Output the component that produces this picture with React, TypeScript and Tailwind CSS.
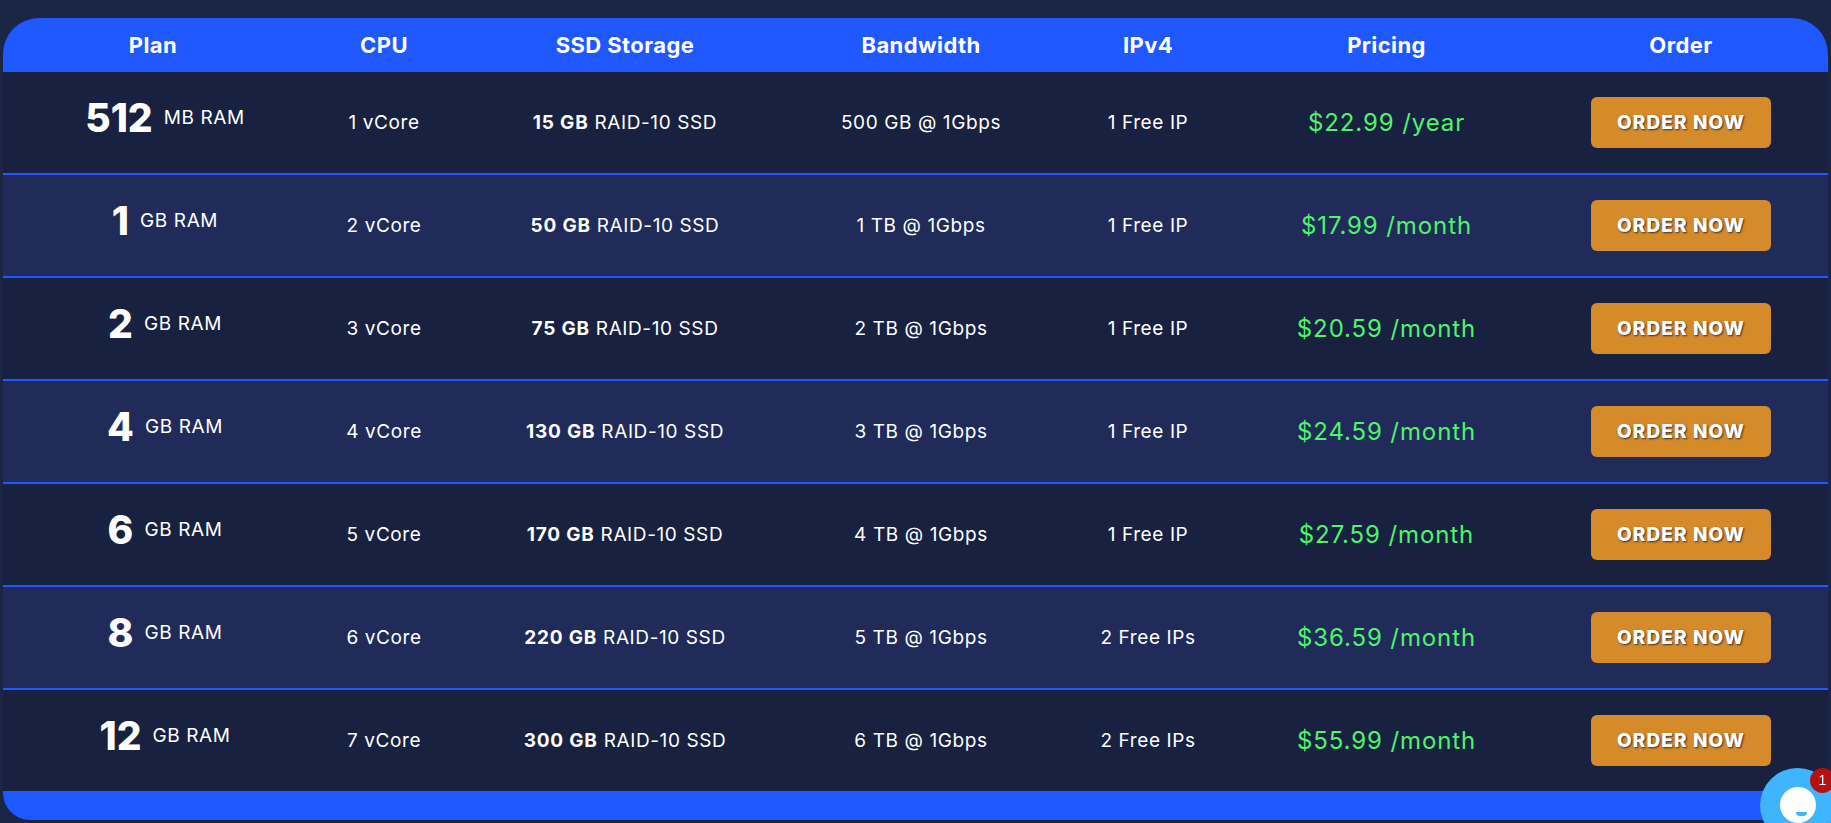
const plans = [
  { size: "512", unit: "MB RAM", cpu: "1 vCore", ssd: "15 GB", bw: "500 GB @ 1Gbps", ip: "1 Free IP", price: "$22.99 /year" },
  { size: "1", unit: "GB RAM", cpu: "2 vCore", ssd: "50 GB", bw: "1 TB @ 1Gbps", ip: "1 Free IP", price: "$17.99 /month" },
  { size: "2", unit: "GB RAM", cpu: "3 vCore", ssd: "75 GB", bw: "2 TB @ 1Gbps", ip: "1 Free IP", price: "$20.59 /month" },
  { size: "4", unit: "GB RAM", cpu: "4 vCore", ssd: "130 GB", bw: "3 TB @ 1Gbps", ip: "1 Free IP", price: "$24.59 /month" },
  { size: "6", unit: "GB RAM", cpu: "5 vCore", ssd: "170 GB", bw: "4 TB @ 1Gbps", ip: "1 Free IP", price: "$27.59 /month" },
  { size: "8", unit: "GB RAM", cpu: "6 vCore", ssd: "220 GB", bw: "5 TB @ 1Gbps", ip: "2 Free IPs", price: "$36.59 /month" },
  { size: "12", unit: "GB RAM", cpu: "7 vCore", ssd: "300 GB", bw: "6 TB @ 1Gbps", ip: "2 Free IPs", price: "$55.99 /month" },
];

const headers = ["Plan", "CPU", "SSD Storage", "Bandwidth", "IPv4", "Pricing", "Order"];
const cols = "grid grid-cols-[300px_162px_320px_272px_182px_295px_1fr]";

export default function App() {
  return (
    <div className="h-[823px] overflow-hidden bg-[#1b2545] px-[3px] pt-[18px] font-['Inter','Noto_Sans',sans-serif] text-white">
      <div className="overflow-hidden rounded-t-[36px] rounded-b-[27px]">
        <div className={`${cols} h-[54px] items-center bg-[#2058ff] text-center text-[22px] font-bold tracking-[0.4px]`}>
          {headers.map((h) => (
            <div key={h}>{h}</div>
          ))}
        </div>
        {plans.map((p, i) => (
          <div
            key={p.size}
            className={`${cols} h-[103px] items-center border-b-2 border-[#2058ff] text-center text-[19px] tracking-[0.6px] last:h-[101px] last:border-b-0 ${
              i % 2 === 0 ? "bg-[#18213f]" : "bg-[#202b59]"
            }`}
          >
            <div className="mb-[10px] flex items-center justify-center gap-[11px] pl-6">
              <span className="text-[39px] leading-none font-extrabold tracking-normal">{p.size}</span>
              <span className="pt-[2px]">{p.unit}</span>
            </div>
            <div className="pt-[2px]">{p.cpu}</div>
            <div className="pt-[2px]">
              <b className="font-bold tracking-[0.8px]">{p.ssd}</b> RAID-10 SSD
            </div>
            <div className="pt-[2px]">{p.bw}</div>
            <div className="pt-[2px]">{p.ip}</div>
            <div className="text-[24px] tracking-[0.9px] text-[#4cf56a]">{p.price}</div>
            <div className="flex justify-center">
              <button className="h-[51px] w-[180px] rounded-[6px] bg-[#d58b2a] pt-[2px] text-[19px] font-extrabold tracking-[1.1px] [text-shadow:1px_1px_2px_#333]">
                ORDER NOW
              </button>
            </div>
          </div>
        ))}
        <div className="h-[27px] bg-[#2058ff]" />
      </div>
      <div className="fixed top-[768px] left-[1760px] h-[75px] w-[75px] rounded-full bg-[#3fb4ff]">
        <div className="absolute top-[19px] left-[20px] h-[36px] w-[36px] rounded-full bg-white" />
        <div className="absolute top-[44px] left-[36px] h-[4px] w-[11px] rounded-b-full bg-[#3fb4ff]" />
        <div className="absolute top-0 left-[50px] flex h-[25px] w-[25px] items-center justify-center rounded-full bg-[#b81010] font-['Liberation_Sans',sans-serif] text-[14px]">
          1
        </div>
      </div>
    </div>
  );
}
